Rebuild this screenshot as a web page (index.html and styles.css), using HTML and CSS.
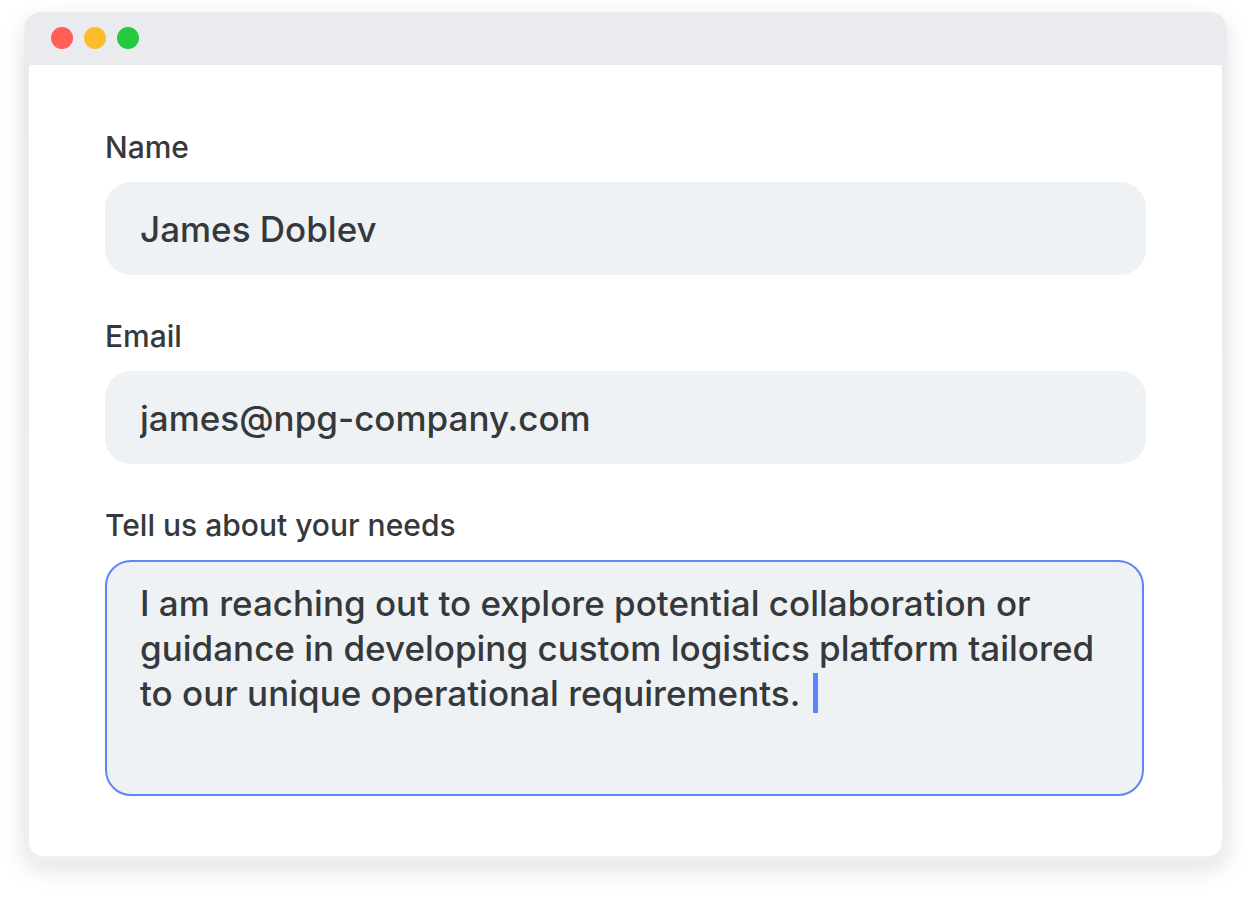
FILE: index.html
```
<!DOCTYPE html>
<html lang="en">
<head>
  <meta charset="UTF-8">
  <title>Contact form</title>
  <meta name="viewport" content="width=device-width, initial-scale=1.0" />
  <link rel="stylesheet" href="styles.css">
</head>
<body>

  <div class="window">
    <div class="title-bar">
      <span class="dot dot-red"></span>
      <span class="dot dot-yellow"></span>
      <span class="dot dot-green"></span>
    </div>

    <form class="contact-form">
      <div class="field">
        <label for="name">Name</label>
        <input type="text" id="name" value="James Doblev" />
      </div>

      <div class="field">
        <label for="email">Email</label>
        <input type="email" id="email" value="james@npg-company.com" />
      </div>

      <div class="field">
        <label for="needs">Tell us about your needs</label>
        <div class="textarea-wrap">
          <textarea id="needs" class="active" spellcheck="false">I am reaching out to explore potential collaboration or guidance in developing custom logistics platform tailored to our unique operational requirements.</textarea>
          <span class="caret"></span>
        </div>
      </div>
    </form>
  </div>

</body>
</html>
```

FILE: styles.css
```
* {
  box-sizing: border-box;
}

body {
  font-family: Inter, "Liberation Sans", sans-serif;
  font-weight: 500;
  margin: 0;
  padding: 12px 24px 36px;
  background-color: #fff;
  color: #36393b;
}

.window {
  padding: 0 5px 5px;
  border-radius: 18px;
  background: linear-gradient(#e9ebee 65px, #ebecec 240px, #eef0f0);
  box-shadow: 0 8px 24px rgba(0, 0, 0, 0.12);
}

.title-bar {
  display: flex;
  align-items: center;
  gap: 11px;
  height: 53px;
  padding: 0 22px 2px;
}

.dot {
  width: 22px;
  height: 22px;
  border-radius: 50%;
}

.dot-red {
  background-color: #ff5f57;
}

.dot-yellow {
  background-color: #fdbc2c;
}

.dot-green {
  background-color: #25c93f;
}

.contact-form {
  display: flex;
  flex-direction: column;
  gap: 43px;
  padding: 64px 76px 60px;
  border-radius: 2px 2px 14px 14px;
  background-color: #fff;
}

label {
  display: block;
  margin-bottom: 17px;
  font-size: 30px;
  line-height: 36px;
}

input,
textarea {
  display: block;
  width: 100%;
  border: none;
  border-radius: 26px;
  outline: none;
  background-color: #eef2f5;
  color: inherit;
  font-family: inherit;
  font-size: 35px;
  font-weight: inherit;
}

input {
  height: 93px;
  padding: 0 35px;
}

textarea {
  height: 236px;
  padding: 19px 33px;
  line-height: 45px;
  resize: none;
}

textarea.active {
  border: 2px solid #6284f5;
}

.textarea-wrap {
  position: relative;
  margin-right: 2px;
}

.caret {
  position: absolute;
  top: 113px;
  left: 708px;
  width: 5px;
  height: 40px;
  background-color: #5f83ff;
}
```
